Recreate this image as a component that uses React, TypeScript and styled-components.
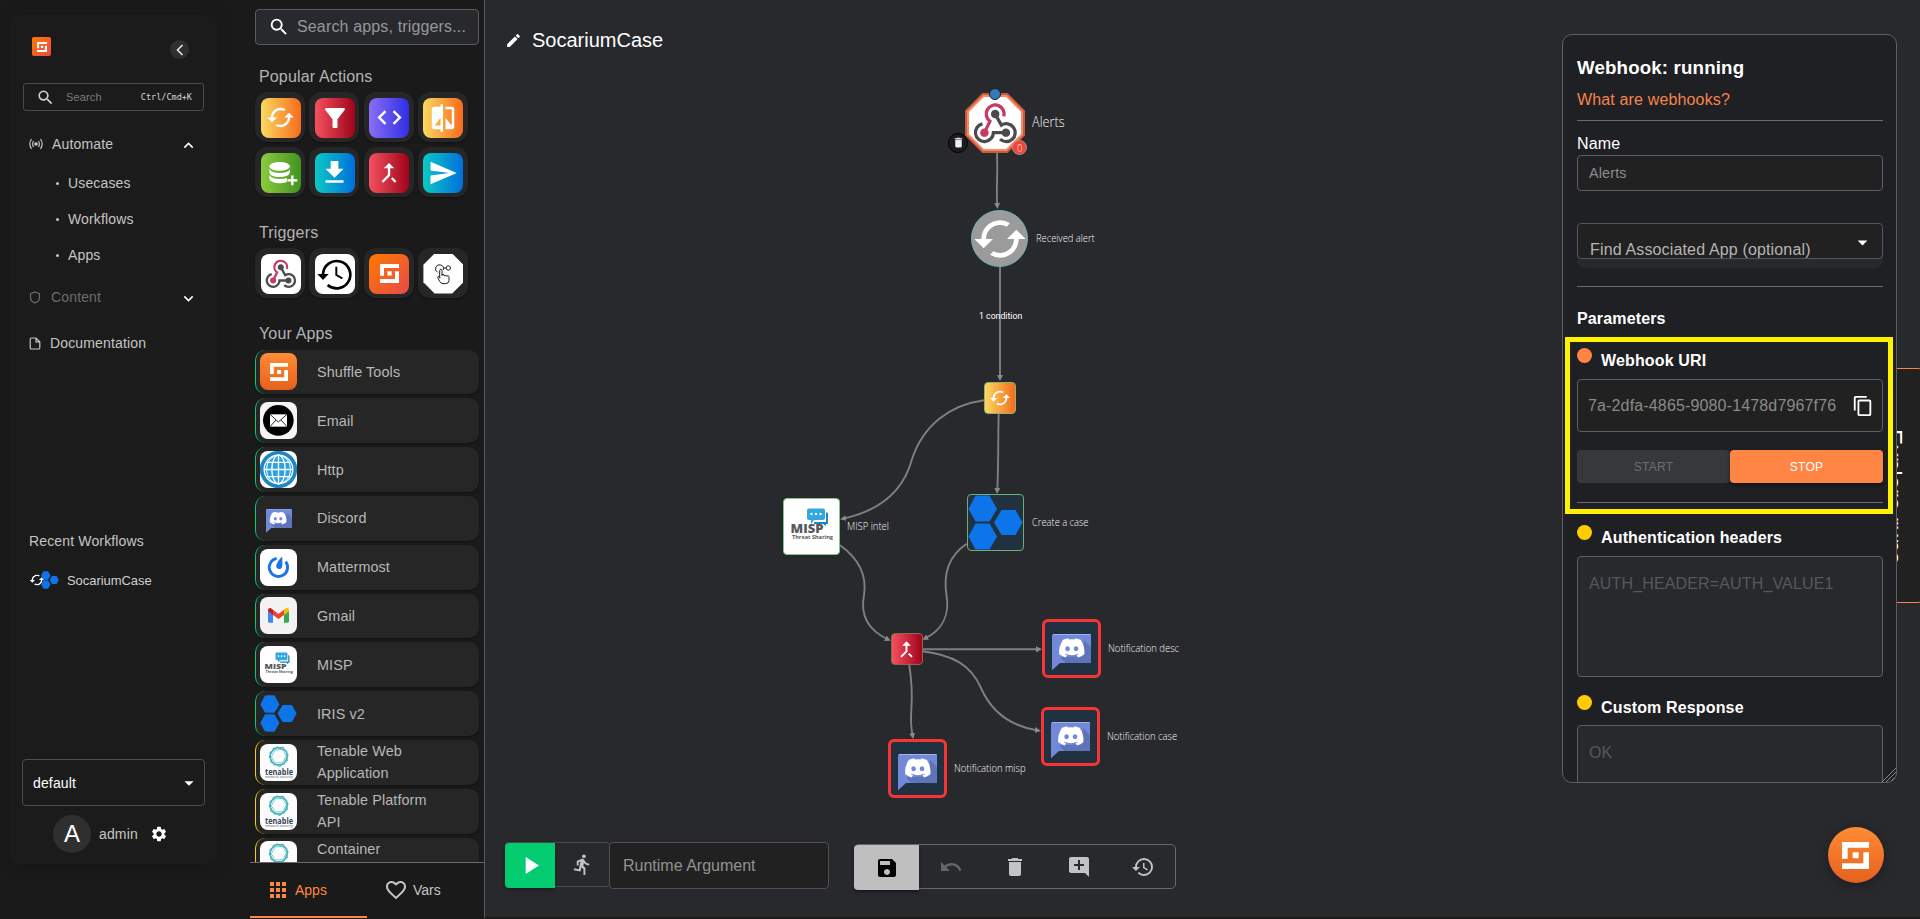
import React from "react";
import styled, { createGlobalStyle, css } from "styled-components";
import {
  MdSearch, MdCached, MdCode, MdCompare, MdCallMerge, MdSend, MdFilterAlt, MdFileDownload,
  MdEdit, MdPlayArrow, MdDirectionsRun, MdSave, MdUndo, MdDelete, MdAddComment, MdRestore,
  MdApps, MdFavoriteBorder, MdContentCopy, MdSettings, MdKeyboardArrowDown, MdKeyboardArrowUp,
  MdArrowDropDown,
} from "react-icons/md";
import { FaDiscord } from "react-icons/fa";

const Global = createGlobalStyle`
  * { box-sizing: border-box; }
  body { margin: 0; background: #1a1a1a; font-family: "Liberation Sans", Arial, sans-serif; letter-spacing: 0.15px; overflow: hidden; }
  svg { display: block; flex: none; }
`;

const Page = styled.div`
  display: flex;
  width: 1920px;
  height: 919px;
  background: #1a1a1a;
  overflow: hidden;
`;

/* ---------- icons ---------- */

const ShuffleMark = ({ size, color = "#fff" }: { size: number; color?: string }) => (
  <svg width={size} height={size} viewBox="0 0 81 81">
    <path fill={color} d="M0 0H81V17H17V50H0ZM64 31H81V81H0V64H64ZM32 31H50V49H32Z" />
  </svg>
);

const WebhookMark = ({ size }: { size: number }) => (
  <svg width={size} height={size} viewBox="0 0 138 130" fill="none" strokeWidth="10">
    <path stroke="#c73a63" d="M94.500 43A27.500 27.500 0 1 0 52 58L35 93" />
    <circle cx="35" cy="93" r="13" fill="#c73a63" />
    <path stroke="#4b4b4b" d="M29 66A27.500 27.500 0 1 0 62.500 93H101" />
    <path stroke="#4b4b4b" d="M68 36L87 70A27.500 27.500 0 1 1 83 113" />
    <circle cx="68" cy="36" r="13" fill="#4b4b4b" />
    <circle cx="101" cy="93" r="13" fill="#4b4b4b" />
  </svg>
);

const HexTrio = ({ size }: { size: number }) => (
  <svg width={size} height={size} viewBox="0 0 110 110" fill="#0d74ea">
    <path d="M15 1H43L58 28L43 53H15L1 28Z" />
    <path d="M15 57H43L58 83L43 109H15L1 83Z" />
    <path d="M67 30H95L109 55L95 80H67L52 55Z" />
  </svg>
);

const DiscordArt = styled.div<{ $s: number }>`
  position: relative;
  width: ${(p) => p.$s}px;
  height: ${(p) => p.$s * 0.92}px;
  margin-top: ${(p) => p.$s * 0.2}px;
  display: flex;
  justify-content: center;
  > svg:first-child { position: absolute; left: 0; top: 0; }
  > svg:last-child { position: relative; }
`;

const DiscordBubble = ({ size }: { size: number }) => (
  <DiscordArt $s={size}>
    <svg width={size} height={size * 0.92} viewBox="0 0 118 108">
      <path fill="#7289da" d="M5 0H113Q118 0 118 5V81Q118 86 113 86H24L0 108V5Q0 0 5 0Z" />
      <path fill="#5f73b8" d="M96 18L118 42V86H40L24 70L92 66Z" />
      <path fill="#a3b2e8" d="M3 0H115V2.500H3Z" />
    </svg>
    <FaDiscord size={size * 0.7} color="#fff" />
  </DiscordArt>
);

const MispArt = styled.div<{ $s: number }>`
  width: 57px;
  height: 57px;
  flex: none;
  transform: scale(${(p) => p.$s / 57});
  transform-origin: center;
  margin: ${(p) => (p.$s - 57) / 2}px;
`;

const MispLogo = ({ size }: { size: number }) => (
  <MispArt $s={size}>
    <svg width="57" height="57" viewBox="0 0 57 57">
      <path fill="#1c86bd" d="M43 14.500H44Q45 14.500 45 16V25Q45 26 44 26H43V28L40 26H31V24H43Z" />
      <path fill="#31a8e0" d="M26 10.500H40Q42 10.500 42 12.500V20Q42 22 40 22H31L28 26V22H26Q24 22 24 20V12.500Q24 10.500 26 10.500Z" />
      <g fill="#fff">
        <circle cx="28.500" cy="16" r="1.200" /><circle cx="33" cy="16" r="1.200" /><circle cx="37.500" cy="16" r="1.200" />
      </g>
      <text x="7.500" y="35" fontFamily="Open Sans, sans-serif" fontWeight="800" fontSize="11.500" letterSpacing="0" textLength="33" lengthAdjust="spacingAndGlyphs" fill="#58595b">MISP</text>
      <text x="9" y="40.500" fontFamily="Open Sans, sans-serif" fontWeight="700" fontSize="5" letterSpacing="0" textLength="41" lengthAdjust="spacingAndGlyphs" fill="#58595b">Threat Sharing</text>
    </svg>
  </MispArt>
);

const TenableLogo = () => (
  <svg width="37" height="37" viewBox="0 0 111 111">
    <g fill="none" stroke="#3fb3bd" strokeWidth="3.500">
      <path d="M41 13L69 10L84 33L72 60L43 63L28 39Z" />
      <path d="M52 9L80 22L82 49L59 67L33 54L30 26Z" />
      <path d="M46 18L68 16L79 36L68 56L45 57L34 38Z" strokeWidth="2" />
    </g>
    <text x="15" y="93" fontFamily="Open Sans, sans-serif" fontWeight="700" fontSize="25" letterSpacing="0" textLength="84" lengthAdjust="spacingAndGlyphs" fill="#3b4757">tenable</text>
    <text x="15" y="103" fontFamily="Open Sans, sans-serif" fontSize="10" letterSpacing="0" textLength="84" lengthAdjust="spacingAndGlyphs" fill="#56606d">network security</text>
  </svg>
);

const EmailLogo = () => (
  <svg width="37" height="37" viewBox="0 0 111 111">
    <circle cx="55" cy="55" r="46" fill="#000" />
    <rect x="30" y="37" width="51" height="37" fill="#fff" />
    <path d="M30 37L55 60L81 37M30 74L48 54M81 74L63 54" fill="none" stroke="#000" strokeWidth="2.500" />
  </svg>
);

const HttpLogo = () => (
  <svg width="37" height="37" viewBox="0 0 111 111" fill="none" stroke="#fff" strokeWidth="4">
    <circle cx="55.500" cy="55.500" r="56" fill="#1e86c4" stroke="none" />
    <circle cx="55.500" cy="55.500" r="43" fill="#2ba3df" />
    <ellipse cx="55.500" cy="55.500" rx="20" ry="43" />
    <ellipse cx="55.500" cy="55.500" rx="36" ry="43" strokeWidth="3" />
    <path d="M55.500 12V99M12 55.500H99M20 34H91M20 77H91" />
  </svg>
);

const MattermostLogo = () => (
  <svg width="37" height="37" viewBox="0 0 111 111">
    <path fill="none" stroke="#1c72e8" strokeWidth="8.500" d="M50 28A27.500 27.500 0 1 0 77 38" />
    <path fill="#1c72e8" d="M64 25Q66 23 67 27L67 50Q66 60 57 60Q47 58 49 47Q54 35 64 25Z" />
  </svg>
);

const GmailLogo = () => (
  <svg width="37" height="37" viewBox="0 0 111 111">
    <path fill="#4285f4" d="M24 42L39 52V77H28Q24 77 24 73Z" />
    <path fill="#34a853" d="M87 42L72 52V77H83Q87 77 87 73Z" />
    <path fill="#ea4335" d="M39 38L55.500 51L72 38V54L55.500 66L39 54Z" />
    <path fill="#c5221f" d="M24 40Q24 32 32 33L39 38V54L24 43Z" />
    <path fill="#fbbc04" d="M87 40Q87 32 79 33L72 38V54L87 43Z" />
  </svg>
);

const DatabasePlus = () => (
  <svg width="40" height="40" viewBox="0 0 120 120" fill="#fff">
    <ellipse cx="56" cy="40" rx="31" ry="13" />
    <path d="M25 48Q30 60 56 60Q82 60 87 48V59Q82 72 56 72Q30 72 25 59Z" />
    <path d="M25 66Q30 78 56 78Q70 78 78 75V86Q70 91 56 91Q30 90 25 78Z" />
    <path d="M90 67H98V78H109V86H98V97H90V86H79V78H90Z" stroke="#5da02a" strokeWidth="1" />
  </svg>
);

const ScheduleMark = () => (
  <svg width="40" height="40" viewBox="0 0 120 120" fill="none" stroke="#000" strokeWidth="8">
    <path d="M24 60A41 41 0 1 1 38 93" />
    <path d="M7 60H41L24 78Z" fill="#000" stroke="none" />
    <path d="M64 38V63L82 73" strokeWidth="6" />
  </svg>
);

const UserInputMark = () => (
  <svg width="40" height="40" viewBox="0 0 120 120" fill="none" stroke="#222" strokeWidth="3">
    <path d="M44 55A12 12 0 1 1 61 48M61 42H69" />
    <circle cx="76" cy="42" r="6.500" />
    <path d="M50 73V50Q50 46 53.500 46Q57 46 57 50V66M57 62Q63 58 64 66Q70 60 71 67Q78 62 78 70V80Q77 89 68 89H60Q54 89 50 82L45 73Q43 68 46 67Q49 67 51 71" />
  </svg>
);

/* ---------- navigation ---------- */

const NavColumn = styled.aside`
  width: 250px;
  flex: none;
  padding: 15px 0 0 10px;
`;

const NavCard = styled.nav`
  width: 207px;
  height: 849px;
  border-radius: 8px;
  background: #1b1b1b;
  box-shadow: 0 0 16px 2px rgba(0, 0, 0, 0.16);
  padding: 22px 13px 0;
  display: flex;
  flex-direction: column;
  color: #c5c5c5;
  font-size: 14px;
`;

const NavHead = styled.div`
  display: flex;
  justify-content: space-between;
  padding: 0 15px 0 9px;
  height: 46px;
`;

const LogoTile = styled.div<{ $s: number; $r: number }>`
  width: ${(p) => p.$s}px;
  height: ${(p) => p.$s}px;
  border-radius: ${(p) => p.$r}px;
  background: linear-gradient(135deg, #ff7a00, #e8494a);
  display: flex;
  align-items: center;
  justify-content: center;
`;

const CollapseButton = styled.button`
  width: 19px;
  height: 19px;
  margin-top: 3px;
  border: 0;
  padding: 0 0 0 1px;
  border-radius: 50%;
  background: #2f2f2f;
  color: #eee;
  display: flex;
  align-items: center;
  justify-content: center;
`;

const NavSearch = styled.div`
  display: flex;
  align-items: center;
  width: 181px;
  height: 28px;
  border: 1px solid #4a4a4a;
  border-radius: 3px;
  color: #7c7c7c;
  font-size: 11px;
  padding-left: 12px;
  > svg { color: #d0d0d0; margin-right: 11px; }
`;

const Shortcut = styled.span`
  margin-left: auto;
  padding-right: 11px;
  padding-bottom: 1px;
  font: 8.5px "DejaVu Sans Mono", monospace;
  letter-spacing: 0;
  color: #d5d5d5;
`;

const NavItem = styled.div<{ $h: number; $dim?: boolean; $gap?: number; $pull?: number }>`
  display: flex;
  align-items: center;
  height: ${(p) => p.$h}px;
  margin-bottom: -${(p) => p.$pull ?? 0}px;
  padding-left: 6px;
  padding-right: 6px;
  gap: ${(p) => p.$gap ?? 8}px;
  color: ${(p) => (p.$dim ? "#6c6c6c" : "#c5c5c5")};
  > svg:nth-of-type(2) { margin-left: auto; margin-top: 3px; color: #fff; }
`;

const SubItem = styled.div`
  display: flex;
  align-items: center;
  height: 36px;
  padding-left: 33px;
  gap: 9px;
  &::before { content: ""; width: 3px; height: 3px; border-radius: 50%; background: #c5c5c5; }
`;

const RecentTitle = styled.div`
  margin-top: 166px;
  padding-left: 6px;
  line-height: 20px;
`;

const RecentItem = styled.div`
  display: flex;
  align-items: center;
  margin-top: 19px;
  height: 20px;
  padding-left: 6px;
  font-size: 13px;
  letter-spacing: -0.05px;
  color: #d0d0d0;
  > svg:nth-of-type(1) { color: #fff; }
  > svg:nth-of-type(2) { margin: 0 8px 0 -4px; }
`;

const OrgSelect = styled.div`
  display: flex;
  align-items: center;
  justify-content: space-between;
  width: 183px;
  height: 47px;
  margin: 169px 0 0 -1px;
  padding: 0 4px 0 10px;
  border: 1px solid #4d4d4d;
  border-radius: 4px;
  color: #fff;
`;

const UserRow = styled.div`
  display: flex;
  align-items: center;
  margin: 9px 0 0 30px;
  > svg { color: #fff; margin-left: 12px; }
`;

const Avatar = styled.div`
  width: 38px;
  height: 38px;
  margin-right: 8px;
  border-radius: 50%;
  background: #2f2f2f;
  color: #fff;
  font-size: 24px;
  display: flex;
  align-items: center;
  justify-content: center;
`;

/* ---------- apps panel ---------- */

const AppsPanel = styled.section`
  width: 235px;
  height: 918px;
  flex: none;
  border-right: 1px solid #55595e;
  display: flex;
  flex-direction: column;
`;

const PanelScroll = styled.div`
  height: 862px;
  padding: 9px 5px 0;
  overflow: hidden;
`;

const AppSearch = styled.div`
  display: flex;
  align-items: center;
  width: 224px;
  height: 36px;
  padding-left: 12px;
  border: 1px solid #5b5b5d;
  border-radius: 4px;
  background: #27292d;
  color: #96979a;
  font-size: 16px;
  gap: 7px;
  white-space: nowrap;
  > svg { color: #fff; }
`;

const GroupTitle = styled.h2<{ $top: number; $gap: number }>`
  margin: ${(p) => p.$top}px 0 ${(p) => p.$gap}px 4px;
  line-height: 20px;
  font-size: 16px;
  font-weight: 400;
  color: #b4b4b4;
`;

const TileGrid = styled.div`
  display: grid;
  grid-template-columns: repeat(4, 50px);
  column-gap: 4.300px;
  row-gap: 5px;
`;

const Tile = styled.div`
  width: 50px;
  height: 50px;
  padding: 1px 0 0 1px;
  border-radius: 12px;
  background: #262626;
  box-shadow: 0 1px 2px rgba(0, 0, 0, 0.4);
  display: flex;
  align-items: center;
  justify-content: center;
`;

const gradients = {
  orange: "linear-gradient(90deg, #fad961, #f76b1c)",
  red: "linear-gradient(90deg, #f5515f, #9f041b)",
  violet: "linear-gradient(90deg, #8a6df5, #2f2fe6)",
  green: "linear-gradient(90deg, #8ccb3e, #429321)",
  blue: "linear-gradient(90deg, #0bc9c5, #006fdc)",
  brand: "linear-gradient(135deg, #ff7a00, #e8494a)",
  white: "#fff",
};

const TileFace = styled.div<{ $fill: keyof typeof gradients; $octagon?: boolean }>`
  width: 40px;
  height: 40px;
  border-radius: 8px;
  background: ${(p) => gradients[p.$fill]};
  color: #fff;
  display: flex;
  align-items: center;
  justify-content: center;
  ${(p) => p.$octagon && css`
    border-radius: 0;
    clip-path: polygon(28% 0, 72% 0, 100% 28%, 100% 72%, 72% 100%, 28% 100%, 0 72%, 0 28%);
  `}
`;

const AppRow = styled.div<{ $accent: string }>`
  display: flex;
  align-items: center;
  width: 224px;
  height: 44.800px;
  margin-bottom: 4px;
  padding-left: 4px;
  border-left: 1px solid ${(p) => p.$accent};
  border-radius: 10px;
  background: #262626;
  box-shadow: 0 1px 2px rgba(0, 0, 0, 0.35);
  color: #b8b8b8;
  font-size: 14.400px;
  letter-spacing: 0.1px;
  line-height: 22px;
`;

const AppIcon = styled.div<{ $bg: string }>`
  width: 37px;
  height: 37px;
  flex: none;
  margin-right: 20px;
  border-radius: 8px;
  overflow: hidden;
  background: ${(p) => p.$bg};
  display: flex;
  align-items: center;
  justify-content: center;
`;

const AppName = styled.span`
  width: 115px;
`;

const PanelTabs = styled.div`
  display: flex;
  height: 56px;
  border-top: 1px solid #6b6b6d;
`;

const PanelTab = styled.div<{ $active?: boolean }>`
  display: flex;
  align-items: center;
  width: 118px;
  padding-left: ${(p) => (p.$active ? 16 : 17)}px;
  gap: 5px;
  font-size: 14px;
  letter-spacing: 0;
  color: ${(p) => (p.$active ? "#ff8544" : "#c5c5c5")};
  border-bottom: 2px solid ${(p) => (p.$active ? "#ff8544" : "transparent")};
`;

/* ---------- workflow canvas ---------- */

const Canvas = styled.main`
  position: relative;
  display: flex;
  justify-content: space-between;
  flex: 1;
  height: 917px;
  background: #27292d;
  overflow: hidden;
`;

const GraphLayer = styled.div`
  position: absolute;
  left: -485px;
  top: 0;
  width: 1920px;
  height: 917px;
`;

const Edges = styled.svg`
  position: absolute;
  left: 0;
  top: 0;
`;

const Node = styled.div<{ $x: number; $y: number; $s: number; $bg?: string; $r?: number; $border?: string }>`
  position: absolute;
  left: ${(p) => p.$x}px;
  top: ${(p) => p.$y}px;
  width: ${(p) => p.$s}px;
  height: ${(p) => p.$s}px;
  background: ${(p) => p.$bg ?? "transparent"};
  border-radius: ${(p) => p.$r ?? 4}px;
  border: ${(p) => p.$border ?? "0"};
  color: #fff;
  display: flex;
  align-items: center;
  justify-content: center;
`;

const NodeLabel = styled.div<{ $x: number; $y: number; $size?: number; $sx?: number }>`
  position: absolute;
  left: ${(p) => p.$x}px;
  top: ${(p) => p.$y}px;
  font-family: "Open Sans", "Noto Sans", sans-serif;
  font-size: ${(p) => p.$size ?? 10.5}px;
  font-weight: 300;
  letter-spacing: 0;
  line-height: 20px;
  margin-top: -11px;
  color: #f4f4f4;
  white-space: nowrap;
  transform: scaleX(${(p) => p.$sx ?? 0.9});
  transform-origin: left;
`;

const EdgeLabel = styled(NodeLabel)`
  font-family: Roboto, sans-serif;
  font-weight: 400;
  margin-top: -10px;
  color: #fff;
`;

const OctagonSvg = styled.svg`
  position: absolute;
  left: 0;
  top: 0;
`;

const NodeMark = styled.div`
  position: relative;
`;

const DiscordNode = ({ x, y }: { x: number; y: number }) => (
  <Node $x={x} $y={y} $s={59} $bg="#213140" $r={6} $border="3px solid #f93434">
    <DiscordBubble size={39.500} />
  </Node>
);

const Workspace = styled.div`
  position: relative;
  display: flex;
  flex-direction: column;
  justify-content: space-between;
  padding: 27px 0 27px 20px;
`;

const Title = styled.h1`
  display: flex;
  align-items: center;
  gap: 10px;
  height: 26px;
  margin: 0;
  font-size: 20px;
  font-weight: 400;
  letter-spacing: 0;
  color: #fff;
`;

const Toolbar = styled.div`
  display: flex;
  align-items: flex-start;
  height: 48px;
`;

const RunGroup = styled.div`
  display: flex;
  width: 105px;
  height: 45px;
  border: 1px solid #4c4d50;
  border-radius: 4px;
  border-right: 0;
`;

const PlayButton = styled.div`
  width: 50px;
  height: 45px;
  margin: 0 0 0 -1px;
  border-radius: 4px 0 0 4px;
  background: #02cb70;
  box-shadow: 0 2px 4px rgba(0, 0, 0, 0.3);
  color: #fff;
  display: flex;
  align-items: center;
  justify-content: center;
`;

const StepButton = styled.div`
  flex: 1;
  display: flex;
  align-items: center;
  justify-content: center;
  color: #c2c3c4;
`;

const RuntimeInput = styled.div`
  width: 220px;
  height: 47px;
  padding-left: 13px;
  margin-left: -1px;
  border: 1px solid #4f5052;
  border-radius: 4px;
  background: #212121;
  color: #929292;
  font-size: 16px;
  letter-spacing: 0;
  line-height: 45px;
`;

const EditGroup = styled.div`
  display: flex;
  width: 322px;
  height: 45px;
  margin: 2px 0 0 25px;
  border: 1px solid #68696c;
  border-radius: 5px;
`;

const EditButton = styled.div<{ $tone?: "primary" | "dim" }>`
  width: 64px;
  height: 43px;
  display: flex;
  align-items: center;
  justify-content: center;
  color: ${(p) => (p.$tone === "dim" ? "#636568" : "#c2c3c4")};
  ${(p) => p.$tone === "primary" && css`
    width: 65px;
    height: 45px;
    margin-left: -1px;
    border-radius: 4px 0 0 4px;
    background: #bfbfbf;
    color: #000;
    box-shadow: 0 2px 3px rgba(0, 0, 0, 0.4);
  `}
`;

/* ---------- trigger details ---------- */

const SideTab = styled.div`
  position: absolute;
  right: -3px;
  top: 368px;
  width: 50px;
  height: 235px;
  border: 1px solid #ff8544;
  border-radius: 5px;
  background: #212121;
  color: #fff;
`;

const SideTabText = styled.div`
  writing-mode: vertical-rl;
  font-size: 24px;
  letter-spacing: 0;
  position: absolute;
  left: 5px;
  top: 60px;
`;

const Details = styled.section`
  position: relative;
  width: 335px;
  height: 749px;
  margin: 34px 23px 0 0;
  padding: 0 13px 0 14px;
  border: 1px solid #5c6064;
  border-radius: 10px;
  background: #1f2024;
  color: #fff;
  font-size: 16px;
  overflow: hidden;
`;

const DetailsTitle = styled.h3`
  margin: 20px 0 0;
  font-size: 18.720px;
  line-height: 26px;
`;

const HelpLink = styled.a`
  display: block;
  margin-top: 9px;
  line-height: 20px;
  color: #f5844c;
`;

const Rule = styled.hr<{ $top: number }>`
  height: 1px;
  margin: ${(p) => p.$top}px 0 0;
  border: 0;
  background: #696a6d;
`;

const FieldLabel = styled.div`
  margin-top: 13px;
  line-height: 20px;
`;

const Field = styled.div<{ $h: number; $top: number; $area?: boolean }>`
  display: flex;
  align-items: ${(p) => (p.$area ? "flex-start" : "center")};
  justify-content: space-between;
  height: ${(p) => p.$h}px;
  margin-top: ${(p) => p.$top}px;
  padding: ${(p) => (p.$area ? "17px 9px 0 11px" : "0 9px 0 11px")};
  border: 1px solid #5e5f61;
  border-radius: 4px;
  background: ${(p) => (p.$area ? "#27292d" : "#212121")};
  color: ${(p) => (p.$area ? "#56585b" : "#8a8a8a")};
  line-height: 20px;
  white-space: nowrap;
  > svg { color: #fff; }
`;

const UriField = styled(Field)`
  padding: 0 8px 0 10px;
`;

const NameValue = styled.span`
  font-size: 14.400px;
  color: #8c8c8c;
`;

const AppSelectBacking = styled.div`
  height: 45px;
  margin-top: 32px;
  border-radius: 8px;
  background: #27292d;
`;

const AppSelect = styled.div`
  display: flex;
  justify-content: space-between;
  height: 36px;
  padding: 16px 8px 0 12px;
  border: 1px solid #555658;
  border-radius: 4px;
  background: #212121;
  color: #b5b5b5;
  line-height: 20px;
  > svg { color: #fff; margin-top: -9px; }
`;

const Heading = styled.div<{ $top: number }>`
  margin-top: ${(p) => p.$top}px;
  font-weight: 700;
  line-height: 20px;
`;

const ParamHead = styled.div<{ $top: number; $dot: string }>`
  display: flex;
  margin-top: ${(p) => p.$top}px;
  gap: 9px;
  font-weight: 700;
  height: 24px;
  line-height: 25px;
  &::before { content: ""; width: 15px; height: 15px; border-radius: 50%; background: ${(p) => p.$dot}; }
`;

const HookButtons = styled.div`
  display: flex;
  height: 33px;
  margin-top: 18px;
`;

const HookButton = styled.button<{ $on?: boolean }>`
  flex: 1;
  border: 0;
  border-radius: 4px;
  font-family: inherit;
  font-size: 12px;
  letter-spacing: 0.3px;
  background: ${(p) => (p.$on ? "#ff8544" : "#37383b")};
  color: ${(p) => (p.$on ? "#fff" : "#6d6e70")};
  ${(p) => p.$on && css`box-shadow: 0 2px 4px rgba(0, 0, 0, 0.4);`}
`;

const Highlight = styled.div`
  position: absolute;
  left: 2px;
  top: 302px;
  width: 328px;
  height: 177px;
  border: 5px solid #fff200;
`;

const ResizeGrip = styled.svg`
  position: absolute;
  right: 0;
  bottom: 0;
`;

const ChatButton = styled.button`
  position: absolute;
  left: 1343px;
  top: 827px;
  width: 56px;
  height: 56px;
  padding: 0;
  border: 0;
  border-radius: 50%;
  background: linear-gradient(180deg, #ff8c34, #e5611d);
  box-shadow: 0 2px 12px rgba(0, 0, 0, 0.3);
  display: flex;
  align-items: center;
  justify-content: center;
  > svg { margin-left: -1px; }
`;

const green = "#02cb70";
const yellow = "#fecc00";

const apps: { name: string; bg: string; accent: string; icon: React.ReactNode }[] = [
  { name: "Shuffle Tools", bg: "linear-gradient(180deg, #ff8c34, #e5611d)", accent: green, icon: <ShuffleMark size={18} /> },
  { name: "Email", bg: "#f5f5f5", accent: green, icon: <EmailLogo /> },
  { name: "Http", bg: "#fff", accent: green, icon: <HttpLogo /> },
  { name: "Discord", bg: "transparent", accent: green, icon: <DiscordBubble size={26} /> },
  { name: "Mattermost", bg: "#fff", accent: green, icon: <MattermostLogo /> },
  { name: "Gmail", bg: "#f2f2f2", accent: green, icon: <GmailLogo /> },
  { name: "MISP", bg: "#fff", accent: green, icon: <MispLogo size={38} /> },
  { name: "IRIS v2", bg: "transparent", accent: green, icon: <HexTrio size={37} /> },
  { name: "Tenable Web Application", bg: "#fcfcfc", accent: yellow, icon: <TenableLogo /> },
  { name: "Tenable Platform API", bg: "#fcfcfc", accent: yellow, icon: <TenableLogo /> },
  { name: "Container Security", bg: "#fcfcfc", accent: yellow, icon: <TenableLogo /> },
];

const actions: { fill: keyof typeof gradients; icon: React.ReactNode }[] = [
  { fill: "orange", icon: <MdCached size={29} /> },
  { fill: "red", icon: <MdFilterAlt size={30} /> },
  { fill: "violet", icon: <MdCode size={29} /> },
  { fill: "orange", icon: <MdCompare size={30} /> },
  { fill: "green", icon: <DatabasePlus /> },
  { fill: "blue", icon: <MdFileDownload size={31} /> },
  { fill: "red", icon: <MdCallMerge size={28} /> },
  { fill: "blue", icon: <MdSend size={30} /> },
];

const edgePaths = [
  "M997 153C998 180 996 185 997.300 206",
  "M1000 267V378",
  "M984 400.300C950 405 923 425 911.700 460C903 492 878 511 843 518.700",
  "M998.700 413C998 440 998.500 470 997.200 491",
  "M840 545.300C858 558 867 575 864 595C860 615 868 630 888 639.500",
  "M966.700 543.700C950 555 943 573 946.500 595C950 615 942 630 925 638.500",
  "M922 649.300H1039",
  "M922 651.300C953 655 971 665 981 688C991 711 1010 726 1038 730.500",
  "M909.300 665C913 690 912 700 911.300 710C910.500 722 911 728 912.700 736",
];

export default function App() {
  return (
    <>
      <Global />
      <Page>
        <NavColumn>
          <NavCard>
            <NavHead>
              <LogoTile $s={19} $r={2}><ShuffleMark size={10} /></LogoTile>
              <CollapseButton>
                <svg width="8" height="12" viewBox="0 0 8 12" fill="none" stroke="#eee" strokeWidth="1.500"><path d="M6.500 1L1.500 6L6.500 11" /></svg>
              </CollapseButton>
            </NavHead>
            <NavSearch>
              <MdSearch size={19} />
              Search
              <Shortcut>Ctrl/Cmd+K</Shortcut>
            </NavSearch>
            <NavItem $h={66} $pull={12} $gap={9}>
              <svg width="14" height="12" viewBox="0 0 14 12" fill="none" stroke="#c5c5c5" strokeWidth="1.200">
                <circle cx="7" cy="6" r="1.200" fill="#c5c5c5" />
                <path d="M4.500 3Q2.800 6 4.500 9M9.500 3Q11.200 6 9.500 9M2.500 1Q-0.800 6 2.500 11M11.500 1Q14.800 6 11.500 11" />
              </svg>
              Automate
              <MdKeyboardArrowUp size={19} />
            </NavItem>
            <SubItem>Usecases</SubItem>
            <SubItem>Workflows</SubItem>
            <SubItem>Apps</SubItem>
            <NavItem $h={48} $dim $gap={10}>
              <svg width="12" height="13" viewBox="0 0 12 13" fill="none" stroke="#6c6c6c" strokeWidth="1.200"><path d="M6 1L10.500 2.700V6.500Q10.500 10.500 6 12Q1.500 10.500 1.500 6.500V2.700Z" /></svg>
              Content
              <MdKeyboardArrowDown size={19} />
            </NavItem>
            <NavItem $h={44} $gap={9}>
              <svg width="12" height="13" viewBox="0 0 12 13" fill="none" stroke="#c5c5c5" strokeWidth="1.200"><path d="M7 1H2.500Q1.200 1 1.200 2.300V10.700Q1.200 12 2.500 12H9.500Q10.800 12 10.800 10.700V4.800ZM7 1V4.800H10.800" /></svg>
              Documentation
            </NavItem>
            <RecentTitle>Recent Workflows</RecentTitle>
            <RecentItem>
              <MdCached size={16} />
              <HexTrio size={18} />
              SocariumCase
            </RecentItem>
            <OrgSelect>default<MdArrowDropDown size={22} /></OrgSelect>
            <UserRow>
              <Avatar>A</Avatar>
              admin
              <MdSettings size={18} />
            </UserRow>
          </NavCard>
        </NavColumn>

        <AppsPanel>
          <PanelScroll>
            <AppSearch><MdSearch size={22} />Search apps, triggers...</AppSearch>
            <GroupTitle $top={22} $gap={5}>Popular Actions</GroupTitle>
            <TileGrid>
              {actions.map((a, i) => (
                <Tile key={i}><TileFace $fill={a.fill}>{a.icon}</TileFace></Tile>
              ))}
            </TileGrid>
            <GroupTitle $top={26} $gap={5}>Triggers</GroupTitle>
            <TileGrid>
              <Tile><TileFace $fill="white"><WebhookMark size={32} /></TileFace></Tile>
              <Tile><TileFace $fill="white"><ScheduleMark /></TileFace></Tile>
              <Tile><TileFace $fill="brand"><ShuffleMark size={19} /></TileFace></Tile>
              <Tile><TileFace $fill="white" $octagon><UserInputMark /></TileFace></Tile>
            </TileGrid>
            <GroupTitle $top={26} $gap={5.600}>Your Apps</GroupTitle>
            {apps.map((a) => (
              <AppRow key={a.name} $accent={a.accent}>
                <AppIcon $bg={a.bg}>{a.icon}</AppIcon>
                <AppName>{a.name}</AppName>
              </AppRow>
            ))}
          </PanelScroll>
          <PanelTabs>
            <PanelTab $active><MdApps size={24} />Apps</PanelTab>
            <PanelTab><MdFavoriteBorder size={24} />Vars</PanelTab>
          </PanelTabs>
        </AppsPanel>

        <Canvas>
          <GraphLayer>
            <Edges width="1920" height="917" viewBox="0 0 1920 917">
              <defs>
                <marker id="arrow" viewBox="0 0 6 6" refX="3" refY="3" markerWidth="6" markerHeight="6" markerUnits="userSpaceOnUse" orient="auto">
                  <path d="M0 0L6 3L0 6Z" fill="#8a8a8a" />
                </marker>
              </defs>
              {edgePaths.map((d) => (
                <path key={d} d={d} fill="none" stroke="#7f7f7f" strokeWidth="1.900" markerEnd="url(#arrow)" />
              ))}
            </Edges>

            <Node $x={965} $y={93} $s={60}>
              <OctagonSvg width="60" height="60" viewBox="0 0 60 60">
                <path d="M18 1.500H42L58.500 18V42L42 58.500H18L1.500 42V18Z" fill="#fff" stroke="#c65b3c" strokeWidth="3" />
                <path d="M18.500 3H41.500L57 18.500V41.500L41.500 57H18.500L3 41.500V18.500Z" fill="none" stroke="#f78a68" strokeWidth="2" />
              </OctagonSvg>
              <NodeMark><WebhookMark size={45} /></NodeMark>
            </Node>
            <Node $x={989} $y={87.500} $s={12} $r={6} $bg="#337ab7" $border="1px solid #16202b" />
            <Node $x={948} $y={132.500} $s={20} $r={10} $bg="#1d1d1d" $border="1px solid #000"><MdDelete size={13} color="#eee" /></Node>
            <Node $x={1012} $y={140} $s={15} $r={8} $bg="#f44336" $border="1px solid #999" />
            <NodeLabel $x={1017} $y={148.500} $size={10.500} $sx={0.9}>0</NodeLabel>
            <NodeLabel $x={1031.500} $y={122.500} $size={14} $sx={0.91}>Alerts</NodeLabel>

            <Node $x={971} $y={210} $s={57} $r={29} $bg="#9b9b9b" $border="1px solid #6db3bb"><MdCached size={56} /></Node>
            <NodeLabel $x={1036} $y={238.500} $sx={0.89}>Received alert</NodeLabel>
            <EdgeLabel $x={978.500} $y={316} $size={9} $sx={0.97}>1 condition</EdgeLabel>

            <Node $x={984} $y={381.500} $s={32} $bg={gradients.orange} $border="1px solid #8fb56c"><MdCached size={22} /></Node>

            <Node $x={783} $y={498} $s={57} $bg="#fff" $border="1px solid #81c784"><MispLogo size={57} /></Node>
            <NodeLabel $x={847} $y={526.500}>MISP intel</NodeLabel>

            <Node $x={967} $y={494} $s={57} $bg="#213140" $border="1px solid #6fae72"><HexTrio size={55} /></Node>
            <NodeLabel $x={1031.500} $y={522.500} $sx={0.89}>Create a case</NodeLabel>

            <Node $x={890.500} $y={633} $s={32} $bg={gradients.red} $border="1px solid #8f6a48"><MdCallMerge size={23} /></Node>

            <DiscordNode x={1042} y={619} />
            <NodeLabel $x={1107.500} $y={649} $sx={0.905}>Notification desc</NodeLabel>
            <DiscordNode x={1041} y={707} />
            <NodeLabel $x={1106.500} $y={736.500}>Notification case</NodeLabel>
            <DiscordNode x={888} y={739} />
            <NodeLabel $x={954} $y={768.500}>Notification misp</NodeLabel>
          </GraphLayer>

          <Workspace>
            <Title><MdEdit size={17} />SocariumCase</Title>
            <Toolbar>
              <RunGroup>
                <PlayButton><MdPlayArrow size={29} /></PlayButton>
                <StepButton><MdDirectionsRun size={23} /></StepButton>
              </RunGroup>
              <RuntimeInput>Runtime Argument</RuntimeInput>
              <EditGroup>
                <EditButton $tone="primary"><MdSave size={24} /></EditButton>
                <EditButton $tone="dim"><MdUndo size={24} /></EditButton>
                <EditButton><MdDelete size={24} /></EditButton>
                <EditButton><MdAddComment size={24} /></EditButton>
                <EditButton><MdRestore size={24} /></EditButton>
              </EditGroup>
            </Toolbar>
          </Workspace>

          <SideTab><SideTabText>Explore runs</SideTabText></SideTab>

          <Details>
            <DetailsTitle>Webhook: running</DetailsTitle>
            <HelpLink>What are webhooks?</HelpLink>
            <Rule $top={10} />
            <FieldLabel>Name</FieldLabel>
            <Field $h={36} $top={1}><NameValue>Alerts</NameValue></Field>
            <AppSelectBacking>
              <AppSelect>Find Associated App (optional)<MdArrowDropDown size={23} /></AppSelect>
            </AppSelectBacking>
            <Rule $top={18} />
            <Heading $top={22}>Parameters</Heading>
            <ParamHead $top={19} $dot="#ff8544">Webhook URI</ParamHead>
            <UriField $h={53} $top={7}>7a-2dfa-4865-9080-1478d7967f76<MdContentCopy size={22} /></UriField>
            <HookButtons>
              <HookButton>START</HookButton>
              <HookButton $on>STOP</HookButton>
            </HookButtons>
            <Rule $top={19} />
            <ParamHead $top={22} $dot="#ffcc00">Authentication headers</ParamHead>
            <Field $area $h={121} $top={7}>AUTH_HEADER=AUTH_VALUE1</Field>
            <ParamHead $top={18} $dot="#ffcc00">Custom Response</ParamHead>
            <Field $area $h={121} $top={6}>OK</Field>
            <Highlight />
            <ResizeGrip width="14" height="15" viewBox="0 0 14 15" stroke="#8a8a8a" strokeWidth="1">
              <path d="M0 15L14 1M4 15L14 5M8 15L14 9M12 15L14 13" />
            </ResizeGrip>
          </Details>

          <ChatButton><ShuffleMark size={27} /></ChatButton>
        </Canvas>
      </Page>
    </>
  );
}
